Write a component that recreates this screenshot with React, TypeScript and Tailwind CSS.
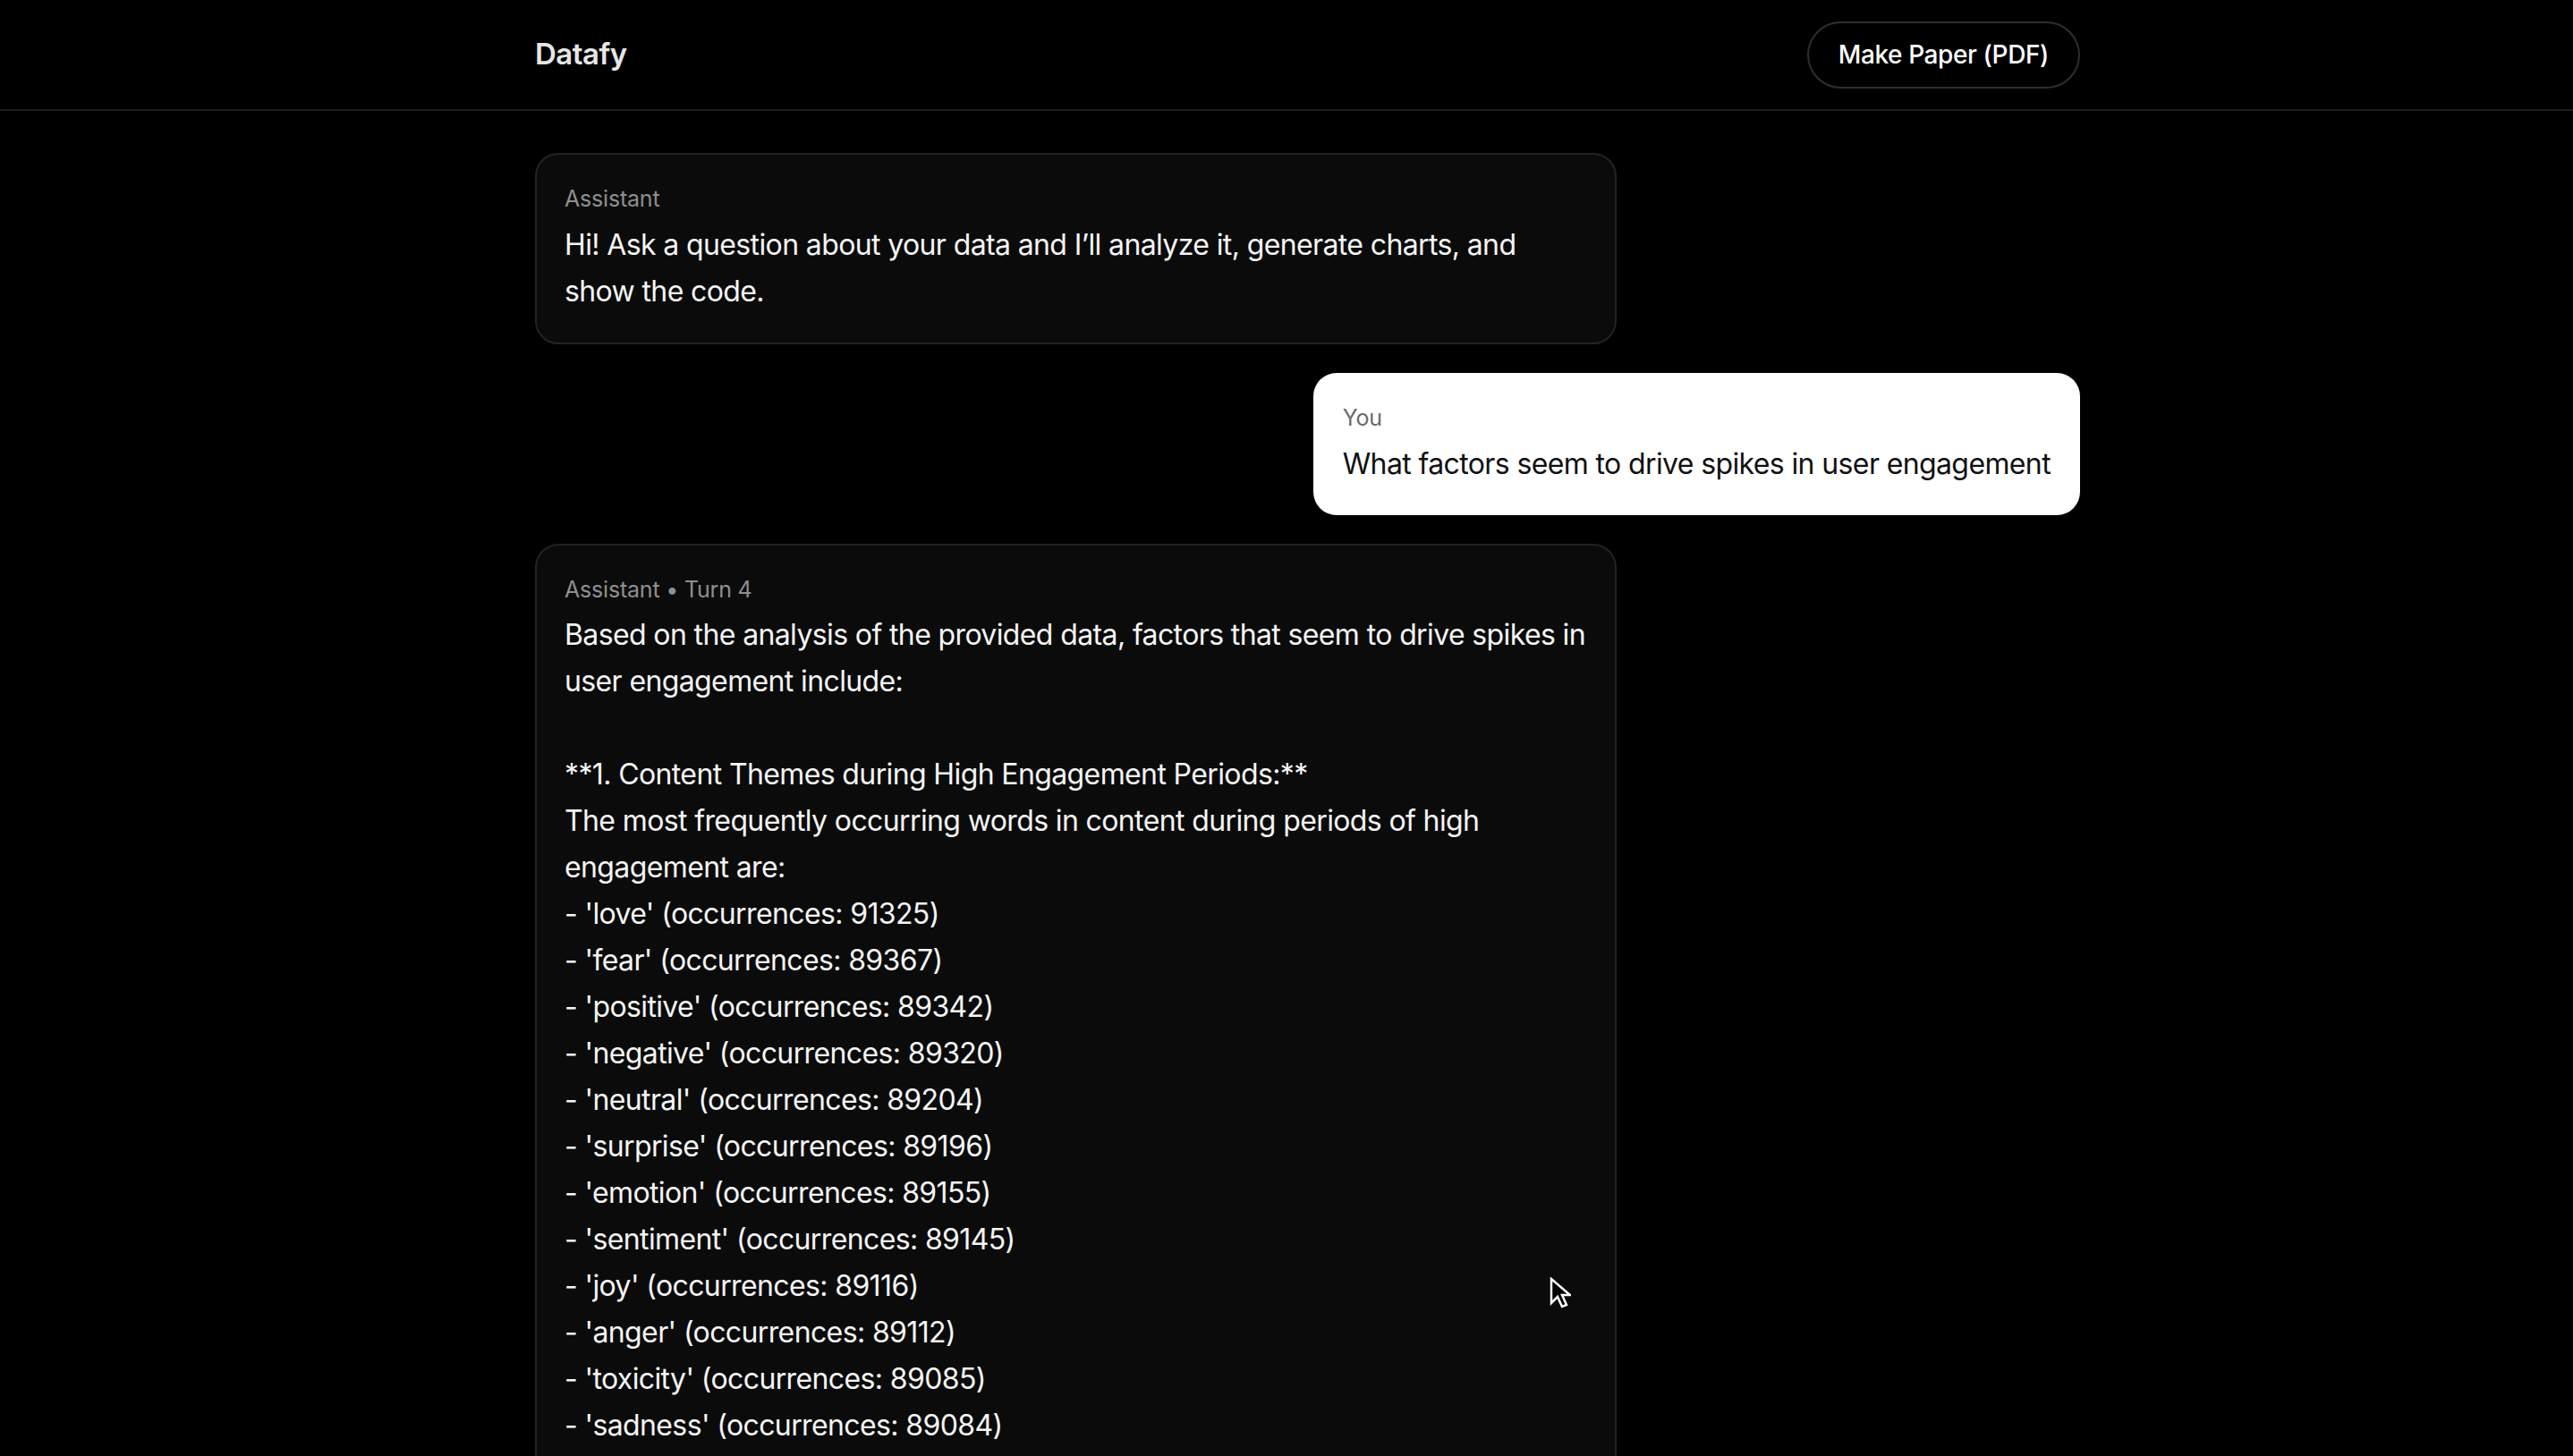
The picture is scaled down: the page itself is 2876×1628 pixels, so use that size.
import React from "react";

const lines: string[] = [
  "Based on the analysis of the provided data, factors that seem to drive spikes in",
  "user engagement include:",
  "",
  "**1. Content Themes during High Engagement Periods:**",
  "The most frequently occurring words in content during periods of high",
  "engagement are:",
  "- 'love' (occurrences: 91325)",
  "- 'fear' (occurrences: 89367)",
  "- 'positive' (occurrences: 89342)",
  "- 'negative' (occurrences: 89320)",
  "- 'neutral' (occurrences: 89204)",
  "- 'surprise' (occurrences: 89196)",
  "- 'emotion' (occurrences: 89155)",
  "- 'sentiment' (occurrences: 89145)",
  "- 'joy' (occurrences: 89116)",
  "- 'anger' (occurrences: 89112)",
  "- 'toxicity' (occurrences: 89085)",
  "- 'sadness' (occurrences: 89084)",
];

export default function App() {
  return (
    <div
      className="relative h-[1628px] w-full overflow-hidden bg-black text-white"
      style={{ fontFamily: "Inter, 'Noto Sans', 'Liberation Sans', sans-serif" }}
    >
      <header className="border-b-2 border-[#1c1c1c]">
        <div className="ml-[598px] flex h-[122px] w-[1727px] items-center justify-between">
          <div className="text-[33px] font-semibold tracking-[-0.5px] text-[#e6e6e6]">Datafy</div>
          <button className="h-[75px] rounded-full border-2 border-[#2e2e2e] px-[33px] text-[28px] font-medium tracking-[-0.4px] text-white">
            Make Paper (PDF)
          </button>
        </div>
      </header>

      <main className="ml-[598px] flex w-[1727px] flex-col gap-[32px] pt-[47px]">
        <div className="w-[1209px] rounded-[26px] border-2 border-[#232323] bg-[#0b0b0b] px-[31px] pt-[31px] pb-[31px]">
          <div className="mb-[8px] text-[25px] leading-[36px] tracking-[-0.2px] text-[#8f8f8f]">Assistant</div>
          <div className="text-[32px] leading-[52px] tracking-[-0.62px] text-[#f5f5f5]">
            <div className="whitespace-nowrap">Hi! Ask a question about your data and I’ll analyze it, generate charts, and</div>
            <div className="whitespace-nowrap">show the code.</div>
          </div>
        </div>

        <div className="self-end rounded-[26px] bg-white px-[33px] pt-[32px] pb-[31px]">
          <div className="mb-[8px] text-[25px] leading-[36px] tracking-[-0.2px] text-[#6b6b6b]">You</div>
          <div className="whitespace-nowrap text-[32px] leading-[52px] tracking-[-0.62px] text-[#111111]">
            What factors seem to drive spikes in user engagement
          </div>
        </div>

        <div className="w-[1209px] rounded-t-[26px] border-2 border-b-0 border-[#232323] bg-[#0b0b0b] px-[31px] pt-[31px] pb-[31px]">
          <div className="mb-[7px] text-[25px] leading-[36px] tracking-[-0.2px] text-[#8f8f8f]">Assistant • Turn 4</div>
          <div className="text-[32px] leading-[52px] tracking-[-0.62px] text-[#f5f5f5]">
            {lines.map((l, i) => (
              <div key={i} className="h-[52px] whitespace-nowrap">
                {l}
              </div>
            ))}
          </div>
        </div>
      </main>

      <svg
        className="absolute left-[1732px] top-[1428px]"
        width="24"
        height="36"
        viewBox="0 0 24 36"
      >
        <path
          d="M2 2 L2 29 L9 22 L14 33 L19 31 L14 20 L23 20 Z"
          fill="#000"
          stroke="#fff"
          strokeWidth="2.5"
          strokeLinejoin="miter"
        />
      </svg>
    </div>
  );
}
